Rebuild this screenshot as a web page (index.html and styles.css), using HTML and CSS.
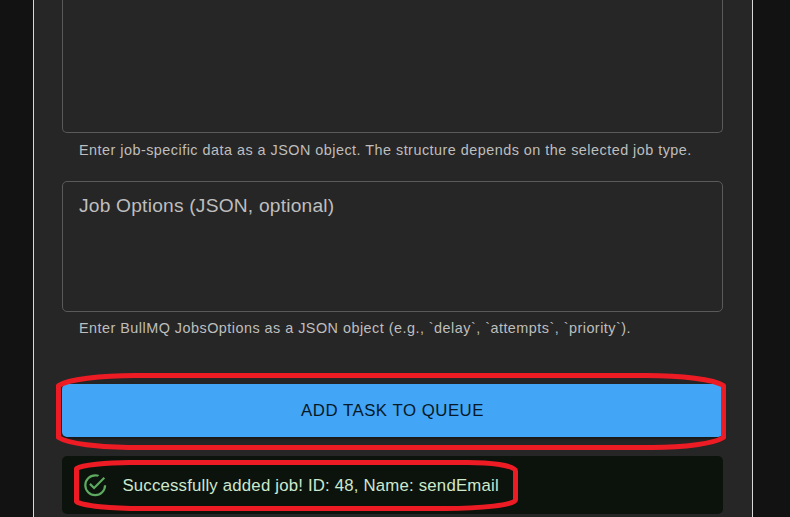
FILE: index.html
```html
<!DOCTYPE html>
<html lang="en">
<head>
<meta charset="utf-8">
<title>Add Job</title>
<link rel="stylesheet" href="styles.css">
</head>
<body>
<main class="card">
  <div class="field field-data"></div>
  <p class="helper">Enter job-specific data as a JSON object. The structure depends on the selected job type.</p>
  <div class="field field-options"><span class="label">Job Options (JSON, optional)</span></div>
  <p class="helper helper-options">Enter BullMQ JobsOptions as a JSON object (e.g., `delay`, `attempts`, `priority`).</p>
  <button class="submit" type="button">ADD TASK TO QUEUE</button>
  <div class="alert" role="alert">
    <svg class="alert-icon" viewBox="0 0 24 24"><path d="M20,12A8,8 0 0,1 12,20A8,8 0 0,1 4,12A8,8 0 0,1 12,4C12.76,4 13.5,4.11 14.2,4.31L15.77,2.74C14.61,2.26 13.34,2 12,2A10,10 0 0,0 2,12A10,10 0 0,0 12,22A10,10 0 0,0 22,12M7.91,10.08L6.5,11.5L11,16L21,6L19.59,4.58L11,13.17L7.91,10.08Z"/></svg>
    <span class="alert-text">Successfully added job! ID: 48, Name: sendEmail</span>
  </div>
</main>
<svg class="marks" viewBox="0 0 790 517">
  <path d="M58.5 385.500C68 379.500 100 375.500 136 375.500H646C682 375.500 714 379.500 723.500 385.500V437.500C714 443.500 685 447.500 652 447.500H128C100 447.500 68 443.500 58.500 437.500Z"/>
  <path d="M76.500 468.500C82 465 106 462.500 130 462.500H468C488 462.500 515.500 465 515.500 471V500C515.500 505 480 508.500 445 508.500H142C112 508.500 82 506 76.500 501.500Z"/>
</svg>
</body>
</html>
```
FILE: styles.css
```css
* {
  box-sizing: border-box;
}

body {
  margin: 0;
  height: 517px;
  overflow: hidden;
  background: #121212;
  font-family: "Liberation Sans", Arial, sans-serif;
}

.card {
  width: 720px;
  height: 517px;
  margin-left: 33px;
  padding: 0 29px 0 28px;
  border: solid #d8d8d8;
  border-width: 0 1px;
  background: #262626;
}

.field {
  width: 661px;
  border: 1px solid #5a5a5a;
  border-radius: 5px;
}

.field-data {
  height: 133px;
  border-top: 0;
  border-radius: 0 0 5px 5px;
}

.field-options {
  height: 131px;
  padding: 10px 16px;
}

.label {
  display: block;
  color: #bebebe;
  font-size: 19.2px;
  line-height: 28px;
  letter-spacing: 0.21px;
}

.helper {
  height: 24px;
  margin: 4px 17px 20px;
  color: #bebebe;
  font-size: 14.4px;
  line-height: 26px;
  letter-spacing: 0.48px;
  white-space: nowrap;
}

.helper-options {
  margin-top: 3px;
  margin-bottom: 45px;
}

.submit {
  display: block;
  width: 661px;
  height: 53px;
  margin: 0 0 19px;
  padding: 0;
  border: 0;
  border-radius: 5px;
  background: #42a5f5;
  box-shadow: 0 4px 1px -2px rgba(0, 0, 0, 0.2), 0 2px 2px rgba(0, 0, 0, 0.14), 0 1px 6px rgba(0, 0, 0, 0.12);
  color: #071827;
  font: 16.8px/29px "Liberation Sans", Arial, sans-serif;
  letter-spacing: 0.52px;
}

.alert {
  display: flex;
  align-items: center;
  gap: 14px;
  width: 661px;
  height: 58px;
  padding: 0 20px;
  border-radius: 5px;
  background: #0c130d;
  color: #cce8cd;
  font-size: 16.8px;
  letter-spacing: 0.19px;
}

.alert-icon {
  width: 26.4px;
  height: 26.4px;
  fill: #66bb6a;
  opacity: 0.9;
}

.alert-text {
  padding-top: 1px;
  white-space: nowrap;
}

.marks {
  position: absolute;
  top: 0;
  left: 0;
  width: 790px;
  height: 517px;
  fill: none;
  stroke: #ed1c24;
  stroke-width: 5;
  stroke-linejoin: round;
  pointer-events: none;
}
```
